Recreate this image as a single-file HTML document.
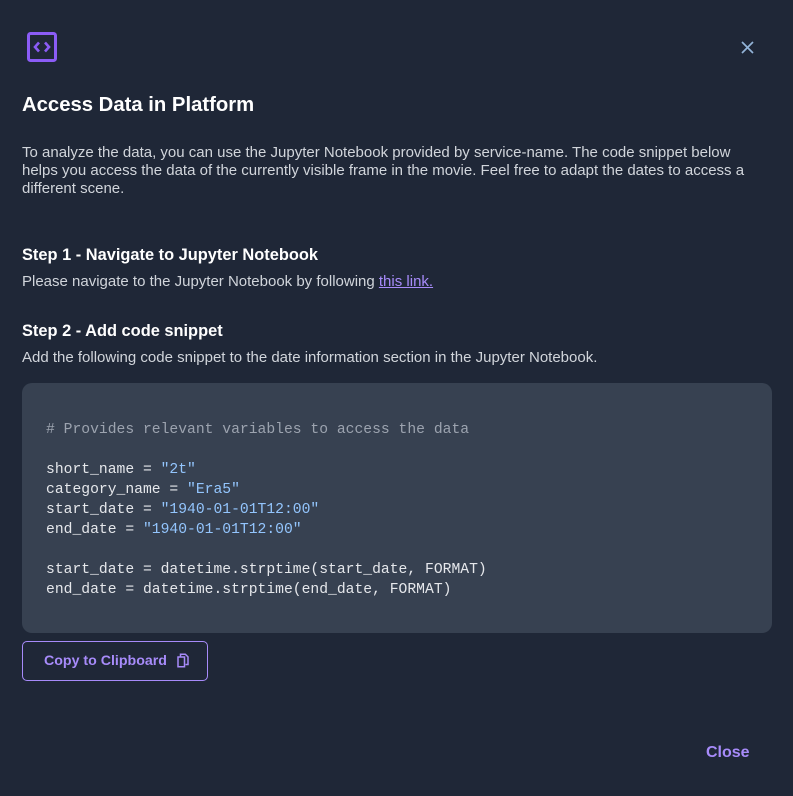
<!DOCTYPE html>
<html><head><meta charset="utf-8"><style>
*{margin:0;padding:0;box-sizing:border-box}
body{width:793px;height:796px;background:#1f2737;font-family:"Liberation Sans",sans-serif;color:#d1d5db;position:relative;overflow:hidden}
.abs{position:absolute}
h1{position:absolute;left:22px;top:94px;font-size:20.3px;font-weight:bold;color:#fff}
.p{position:absolute;left:22px;font-size:15px;line-height:18px;color:#d1d5db;width:740px}
h2{position:absolute;left:22px;font-size:16.4px;font-weight:bold;color:#fff}
a{color:#a78bfa;text-decoration:underline}
.code{position:absolute;left:22px;top:383px;width:750px;height:250px;background:#374151;border-radius:10px;padding:37px 24px;font-family:"Liberation Mono",monospace;font-size:14.7px;line-height:20px;color:#e5e7eb;white-space:pre}
.c{color:#9ca3af}.s{color:#93c5fd}
.btn{position:absolute;left:22px;top:641px;width:186px;height:40px;border:1px solid #a78bfa;border-radius:5px;color:#a78bfa;font-weight:bold;font-size:14.2px;padding:11px 0 0 21px}
</style></head><body>
<svg class="abs" style="left:27px;top:32px" width="30" height="30" viewBox="0 0 30 30"><rect x="1.5" y="1.5" width="27" height="27" rx="2" fill="none" stroke="#8b5cf6" stroke-width="3"/><path d="M12 10.5 8 15l4 4.5M18 10.5l4 4.5-4 4.5" fill="none" stroke="#8b5cf6" stroke-width="2.6"/></svg>
<svg class="abs" style="left:741px;top:41px" width="13" height="13" viewBox="0 0 13 13"><path d="M1 1l11 11M12 1 1 12" stroke="#93b4d8" stroke-width="1.7"/></svg>
<h1>Access Data in Platform</h1>
<div class="p" style="top:144px">To analyze the data, you can use the Jupyter Notebook provided by service-name. The code snippet below helps you access the data of the currently visible frame in the movie. Feel free to adapt the dates to access a different scene.</div>
<h2 style="top:246px">Step 1 - Navigate to Jupyter Notebook</h2>
<div class="p" style="top:273px">Please navigate to the Jupyter Notebook by following <a>this link.</a></div>
<h2 style="top:322px">Step 2 - Add code snippet</h2>
<div class="p" style="top:349px">Add the following code snippet to the date information section in the Jupyter Notebook.</div>
<div class="code"><span class="c"># Provides relevant variables to access the data</span>

short_name = <span class="s">"2t"</span>
category_name = <span class="s">"Era5"</span>
start_date = <span class="s">"1940-01-01T12:00"</span>
end_date = <span class="s">"1940-01-01T12:00"</span>

start_date = datetime.strptime(start_date, FORMAT)
end_date = datetime.strptime(end_date, FORMAT)</div>
<div class="btn">Copy to Clipboard <svg style="vertical-align:-3px;margin-left:6px" width="12" height="15" viewBox="0 0 12 15"><path d="M3.5 3.5V1.2h4.8l2.7 2.7v7.6H8.5M1 4h6.5v9.8H1z" fill="none" stroke="#a78bfa" stroke-width="1.5"/></svg></div>
<div class="abs" style="left:706px;top:744px;color:#a78bfa;font-weight:bold;font-size:16px">Close</div>
</body></html>
